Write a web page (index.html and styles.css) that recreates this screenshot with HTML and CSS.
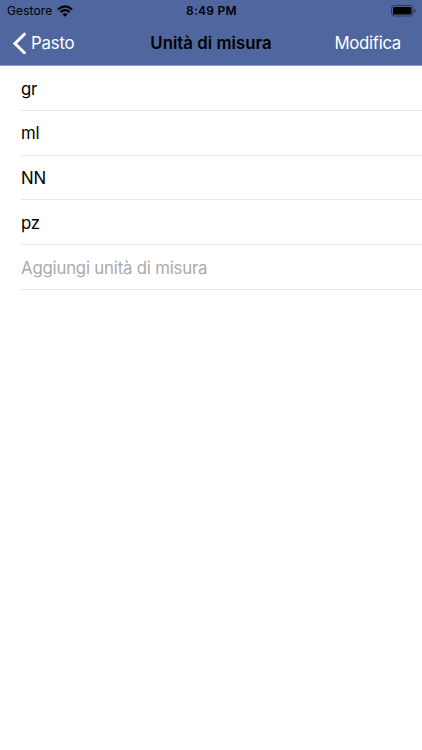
FILE: index.html
```html
<!DOCTYPE html>
<html lang="it">
<head>
<meta charset="utf-8">
<title>Unità di misura</title>
<link rel="stylesheet" href="styles.css">
</head>
<body>
<header class="top">
  <div class="status">
    <div class="carrier"><span class="carrier-name">Gestore</span>
      <svg class="wifi" width="16" height="12" viewBox="0 0 16 12"><g fill="none" stroke="#000" stroke-width="2.2"><path d="M1 4.5Q8-1.6 15 4.5"/><path d="M3.4 7.2Q8 3.2 12.6 7.2"/></g><path d="M5.4 9.2Q8 7.2 10.6 9.2L8 11.8Z"/></svg>
    </div>
    <time class="clock">8:49 PM</time>
    <svg class="battery" width="25" height="12" viewBox="0 0 25 12"><rect x=".5" y=".5" width="21.5" height="10.5" rx="3" fill="none" stroke="#000" stroke-opacity=".45"/><rect x="2" y="2" width="18.5" height="7.5" rx="1.6"/><path d="M23.3 4Q24.7 4.5 24.7 5.8T23.3 7.6Z" fill-opacity=".5"/></svg>
  </div>
  <nav class="nav">
    <a class="back"><svg width="13" height="22" viewBox="0 0 13 22"><path d="M11.4 2.2L2 11.5L11.4 20.8" fill="none" stroke="#fff" stroke-width="3" stroke-linecap="round"/></svg><span class="back-label">Pasto</span></a>
    <h1 class="title">Unità di misura</h1>
    <a class="edit"><span class="edit-label">Modifica</span></a>
  </nav>
</header>
<ul class="units">
  <li><span>gr</span></li>
  <li><span>ml</span></li>
  <li><span>NN</span></li>
  <li><span>pz</span></li>
  <li class="add"><span>Aggiungi unità di misura</span></li>
</ul>
</body>
</html>
```
FILE: styles.css
```css
* { box-sizing: border-box; }
body { margin: 0; background: #fff; color: #000; font-family: Inter, sans-serif; }
.top { height: 66px; background: #4f669f; border-bottom: 1px solid #8e9abf; }
.status { height: 21px; display: grid; grid-template-columns: 1fr auto 1fr; align-items: center; padding: 0 6px 0 7px; font-size: 12px; }
.carrier { display: flex; align-items: center; gap: 4.5px; letter-spacing: .1px; }
.clock { font-weight: 600; letter-spacing: .25px; }
.battery { justify-self: end; }
.nav { height: 44px; display: grid; grid-template-columns: 1fr auto 1fr; align-items: center; padding: 0 21px 0 13px; font-size: 16.8px; letter-spacing: -.2px; color: #fff; }
.back { display: flex; align-items: center; gap: 5px; }
.back-label, .edit-label { display: block; padding-bottom: 1px; }
.title { margin: 0 -8px 0 0; padding-bottom: 1px; font-size: 16.8px; font-weight: 600; letter-spacing: .02px; color: #000; }
.edit { justify-self: end; letter-spacing: -.3px; }
.units { margin: 0; padding: 0 0 0 21px; list-style: none; font-size: 16.8px; letter-spacing: -.2px; }
.units li { height: 44.8px; display: flex; align-items: center; padding-top: 1.4px; border-bottom: 1px solid #e6e6e8; }
.add { color: #aaa; }
```
